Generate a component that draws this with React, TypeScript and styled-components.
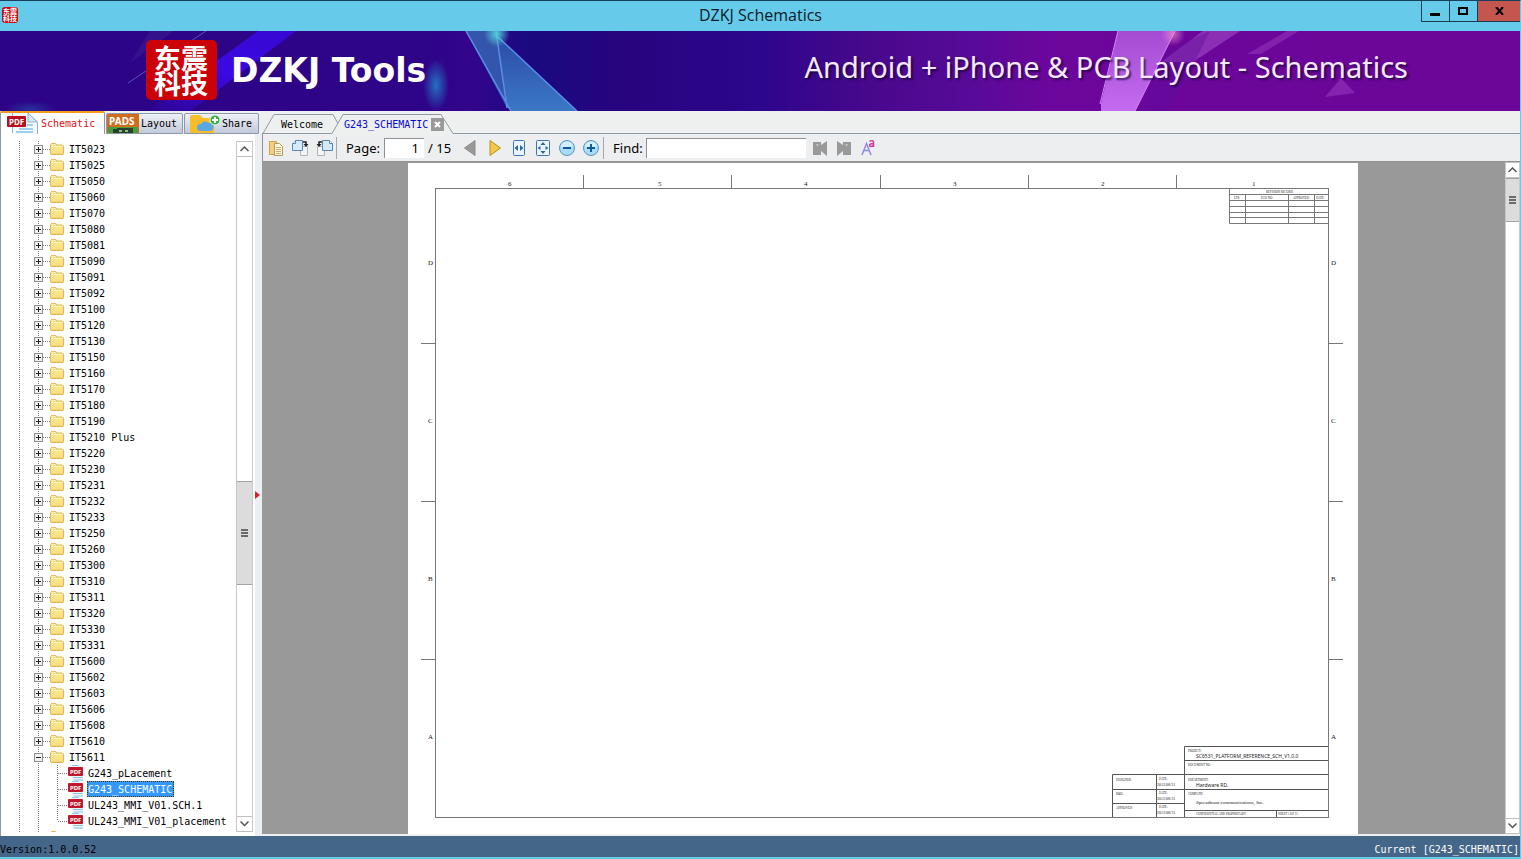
import React from "react";
import styled, { createGlobalStyle, css } from "styled-components";

const MONO = `"DejaVu Sans Mono", "Liberation Mono", monospace`;
const UI = `"Noto Sans", "Open Sans", sans-serif`;

const Global = createGlobalStyle`
  *, *::before, *::after { box-sizing: border-box; }
  body { margin: 0; background: #eef0f0; }
  button { margin: 0; padding: 0; border: 0; background: none; color: inherit; font: inherit; }
  ul { list-style: none; margin: 0; padding: 0; }
  h1, p { margin: 0; font-weight: 400; }
  svg { display: block; flex: none; }
`;

const Shell = styled.div`
  display: flex;
  flex-direction: column;
  height: 100vh;
  overflow: hidden;
  border-top: 1px solid #17405c;
  border-right: 1px solid #66caea;
  border-bottom: 2px solid #66caea;
  background: #eef0f0;
  font-family: ${MONO};
  font-size: 10px;
  color: #000;
`;

/* Title bar */
const TitleBar = styled.header`
  display: grid;
  grid-template-columns: 100px 1fr 100px;
  flex: none;
  height: 30px;
  margin-right: -1px;
  background: #66caea;
`;
const AppBadge = styled.div`
  width: 16px;
  height: 16px;
  margin: 6px 2px;
  padding: 1px;
  border-radius: 3px;
  background: #c60810;
  color: #fff;
  font: 700 7px/7px "Noto Sans CJK SC", sans-serif;
  word-break: break-all;
`;
const WindowTitle = styled.h1`
  font: 400 16px/29px "Open Sans", "Noto Sans", sans-serif;
  color: #0b1c26;
  text-align: center;
`;
const WindowButtons = styled.div`
  display: flex;
  height: 21px;
  border: solid #1c3a4a;
  border-width: 0 0 1px 1px;
`;
const WindowButton = styled.button<{ $close?: boolean }>`
  display: grid;
  place-items: center;
  flex: ${(p) => (p.$close ? "45" : "28")} 1 0;
  background: ${(p) => (p.$close ? "#c4564f" : "transparent")};
  & + & { border-left: 1px solid #1c3a4a; }
`;

/* Banner */
const Banner = styled.section`
  position: relative;
  display: flex;
  align-items: center;
  flex: none;
  height: 80px;
  padding: 0 112px 0 146px;
  color: #fff;
  background: linear-gradient(90deg, #2c0486 0, #2e0488 28%, #33058c 31%, #190a80 35%, #28047f 41%, #2c068c 50%, #47088c 57%, #580a98 64%, #6c069c 69%, #6c0698 100%);
`;
const BannerArt = styled.svg`
  position: absolute;
  inset: 0;
  width: 100%;
  height: 100%;
`;
const Seal = styled.div`
  position: relative;
  width: 71px;
  height: 60px;
  margin-top: -2px;
  padding: 5px 8px;
  border-radius: 5px;
  background: #cb0207;
  font: 700 27px/25px "Noto Sans CJK SC", sans-serif;
  word-break: break-all;
`;
const Brand = styled.p`
  position: relative;
  margin-left: 14px;
  font: 700 33px/40px "DejaVu Sans", sans-serif;
`;
const Tagline = styled.p`
  position: relative;
  margin: -8px 0 0 auto;
  font: 400 29px/40px ${UI};
  color: #f6e9fb;
  text-shadow: 2px 2px 2px rgba(20, 0, 50, 0.7);
`;

/* Main area */
const Workspace = styled.main`
  display: flex;
  flex: 1;
  min-height: 0;
`;
const Sidebar = styled.aside`
  display: flex;
  flex-direction: column;
  flex: none;
  width: 262px;
`;
const SideTabs = styled.div`
  display: flex;
  align-items: flex-end;
  flex: none;
  gap: 1px;
  height: 23px;
`;
const SideTab = styled.button<{ $active?: boolean; $width: number }>`
  display: flex;
  align-items: center;
  gap: 2px;
  width: ${(p) => p.$width}px;
  height: 21px;
  border: 1px solid #8b9bab;
  border-radius: 2px 2px 0 0;
  background: linear-gradient(#eff1f7, #c3c9da);
  white-space: nowrap;
  overflow: hidden;
  ${(p) =>
    p.$active &&
    css`
      height: 23px;
      padding-left: 6px;
      border-top: 2px solid #f59c1c;
      border-bottom: 0;
      background: #fff;
      color: #e0101c;
    `}
`;
const SidePanel = styled.div`
  display: flex;
  flex: 1;
  min-height: 0;
  padding: 7px 0 4px;
  border-left: 1px solid #8b9bab;
  background: linear-gradient(90deg, #fff 254px, #eceff1 254px);
`;
const Tree = styled.ul`
  flex: 1;
  min-width: 0;
  overflow: hidden;
  background:
    repeating-linear-gradient(#777 0 1px, #fff 1px 2px) 18px 0 / 1px 100% no-repeat,
    repeating-linear-gradient(#777 0 1px, #fff 1px 2px) 37px 0 / 1px 100% no-repeat;
`;
const TreeRow = styled.div<{ $level?: number }>`
  display: flex;
  align-items: center;
  height: 16px;
  padding-left: ${(p) => (p.$level ? 57 : 33)}px;
  white-space: nowrap;
`;
const Dots = styled.span<{ $width: number }>`
  width: ${(p) => p.$width}px;
  height: 1px;
  background: repeating-linear-gradient(90deg, #777 0 1px, #fff 1px 2px);
`;
const Toggle = styled.button`
  display: grid;
  place-items: center;
  width: 9px;
  height: 9px;
  border: 1px solid #8e8e8e;
  background: #f2f2f2;
`;
const FolderLabel = styled.span`
  margin-left: 5px;
`;
const FileList = styled.ul`
  background: repeating-linear-gradient(#777 0 1px, #fff 1px 2px) 56px 0 / 1px calc(100% - 8px) no-repeat;
`;
const FileLabel = styled.span<{ $selected?: boolean }>`
  height: 16px;
  margin-left: 3px;
  padding: 0 2px 0 1px;
  line-height: 18px;
  outline: 1px dotted ${(p) => (p.$selected ? "#5a3500" : "transparent")};
  outline-offset: -1px;
  background: ${(p) => (p.$selected ? "#3399ff" : "transparent")};
  color: ${(p) => (p.$selected ? "#fff" : "#000")};
`;

/* Scroll bars */
const ScrollBar = styled.div<{ $width: number }>`
  display: flex;
  flex-direction: column;
  flex: none;
  width: ${(p) => p.$width}px;
  border: 1px solid #c9c9c9;
  border-width: 0 1px;
  background: #fff;
`;
const ScrollArrow = styled.button`
  display: grid;
  place-items: center;
  flex: none;
  height: 16px;
  border: 1px solid #c0c0c0;
  border-width: 1px 0;
`;
const ScrollSpace = styled.div<{ $grow: number }>`
  flex: ${(p) => p.$grow} 1 0;
`;
const ScrollThumb = styled.div<{ $grow: number }>`
  display: grid;
  place-items: center;
  flex: ${(p) => p.$grow} 1 0;
  border: 1px solid #a3a3a3;
  border-width: 1px 0;
  background: #dcdcdc;
`;
const Splitter = styled.div`
  flex: none;
  width: 9px;
  display: flex;
  align-items: center;
  padding: 17px 0 0 2px;
`;

/* Viewer */
const Viewer = styled.section`
  display: flex;
  flex-direction: column;
  flex: 1;
  min-width: 0;
`;
const DocTabs = styled.div`
  display: flex;
  flex: none;
  height: 23px;
`;
const DocTab = styled.div<{ $active?: boolean }>`
  position: relative;
  display: flex;
  align-items: center;
  gap: 3px;
  width: ${(p) => (p.$active ? 121 : 70)}px;
  padding: 4px 0 0 ${(p) => (p.$active ? 12 : 19)}px;
  color: ${(p) => (p.$active ? "#0808d8" : "#000")};
`;
const TabShape = styled.svg`
  position: absolute;
  left: 0;
  top: 0;
  overflow: visible;
`;
const TabLabel = styled.button`
  position: relative;
`;
const CloseTab = styled.button`
  position: relative;
  display: grid;
  place-items: center;
  width: 13px;
  height: 13px;
  background: #999;
`;
const TabFill = styled.div`
  flex: 1;
  border-bottom: 1px solid #8f9ba4;
`;
const Toolbar = styled.div`
  display: flex;
  align-items: center;
  flex: none;
  height: 28px;
  padding-left: 5px;
  border: solid #8f9396;
  border-width: 0 0 1px 1px;
  background: #edeeef;
  font: 400 13px/20px ${UI};
`;
const ToolGroup = styled.div<{ $left?: number }>`
  display: flex;
  align-items: center;
  gap: 8px;
  margin-left: ${(p) => p.$left ?? 0}px;
`;
const ToolButton = styled.button`
  display: grid;
  place-items: center;
  width: 16px;
  height: 20px;
`;
const Separator = styled.i`
  width: 1px;
  height: 22px;
  margin: 0 9px 0 4px;
  background: #a5a8ab;
`;
const FieldLabel = styled.label`
  width: 33px;
`;
const Field = styled.input`
  width: 160px;
  height: 20px;
  margin: 0 4px 0 0;
  padding: 0 5px;
  border: solid #8f9396;
  border-width: 1px 0 0 1px;
  border-radius: 0;
  background: #fff;
  font: inherit;
  outline: 0;
`;
const PageField = styled(Field)`
  width: 40px;
  margin-left: 5px;
  text-align: right;
`;
const CanvasRow = styled.div`
  display: flex;
  flex: 1;
  min-height: 0;
  margin-bottom: 2px;
`;
const Canvas = styled.div`
  display: flex;
  justify-content: center;
  flex: 1;
  min-width: 0;
  overflow: hidden;
  padding: 1px 1px 0 0;
  background: #999;
`;
const Sheet = styled.svg`
  background: #fff;
`;

const StatusBar = styled.footer`
  display: flex;
  justify-content: space-between;
  flex: none;
  height: 21px;
  padding: 4px 1px 0 0;
  background: #446688;
  line-height: 20px;
  height: 21px;
  overflow: hidden;
`;
const StatusCurrent = styled.span`
  color: #fff;
`;

const folders = [
  "IT5023", "IT5025", "IT5050", "IT5060", "IT5070", "IT5080", "IT5081", "IT5090", "IT5091", "IT5092",
  "IT5100", "IT5120", "IT5130", "IT5150", "IT5160", "IT5170", "IT5180", "IT5190", "IT5210 Plus", "IT5220",
  "IT5230", "IT5231", "IT5232", "IT5233", "IT5250", "IT5260", "IT5300", "IT5310", "IT5311", "IT5320",
  "IT5330", "IT5331", "IT5600", "IT5602", "IT5603", "IT5606", "IT5608", "IT5610", "IT5611",
];
const files = ["G243_pLacement", "G243_SCHEMATIC", "UL243_MMI_V01.SCH.1", "UL243_MMI_V01_placement"];

const FolderIcon = () => (
  <svg width="14" height="13" viewBox="0 0 14 13">
    <path d="M.5 11V1.500l1-1h4l1.500 1.500h5.500l1 1V11l-.5.500H1z" fill="#fbe28a" stroke="#dfb958" />
    <path d="M1 3.500h12M1.500 1.500h3.500" stroke="#fff3bd" />
    <path d="M1.500 10.500h11" stroke="#f3d072" />
  </svg>
);

const PdfSmall = () => (
  <svg width="16" height="16" viewBox="0 0 16 16">
    <path d="M4 0h7l4 4v12H4z" fill="#e9f5fb" />
    <path d="M4 .5h6.500M5 12.500h10M6 15h9" stroke="#8fc4e2" />
    <rect x="0" y="2" width="15" height="9" rx="1" fill="#c3182b" />
    <text x="2" y="9" fontSize="6" fontWeight="700" fontFamily="Noto Sans" fill="#fff">PDF</text>
  </svg>
);

const PdfLarge = () => (
  <svg width="32" height="21" viewBox="0 0 32 21">
    <path d="M5 0h16l9 9v12H5z" fill="#f3f9fd" />
    <path d="M5.500 0v20M21 0l9.500 9v12" fill="none" stroke="#94b4cc" />
    <path d="M21 0v9h9z" fill="#d4e8f5" stroke="#94b4cc" />
    <path d="M12 16h14M20 12h6M9 19h17" stroke="#9fcfec" strokeWidth="2" />
    <rect x="0" y="3" width="19" height="11" rx="1" fill="#b90f1f" />
    <text x="2" y="12" fontSize="8" fontWeight="700" fontFamily="Noto Sans" fill="#fff">PDF</text>
  </svg>
);

const PadsIcon = () => (
  <svg width="32" height="19" viewBox="0 0 32 19">
    <rect width="32" height="19" fill="#cf6d1d" />
    <path d="M1 13h30v6H1z" fill="#4f9a3c" />
    <path d="M6 19v-4h4v-1h16v5z" fill="#28402d" />
    <path d="M12 16h3v2h-3zM18 16h3v2h-3z" fill="#8cc47b" />
    <text x="2" y="11" fontSize="10" fontWeight="700" fontFamily="Noto Sans" fill="#fff">PADS</text>
  </svg>
);

const ShareIcon = () => (
  <svg width="35" height="19" viewBox="0 0 35 19">
    <path d="M5 19V3q0-2 2-2h8l3 3h9q2 0 2 2v13z" fill="#f8bd2b" />
    <path d="M15 17a3.500 3.500 0 0 1 1-7 5 5 0 0 1 8-1 4 4 0 0 1 1 8z" fill="#5ba8e6" />
    <circle cx="30" cy="6" r="5" fill="#35ae4c" stroke="#e6f3e4" />
    <path d="M30 3v6M27 6h6" stroke="#fff" strokeWidth="2" />
  </svg>
);

const Chevron = ({ down }: { down?: boolean }) => (
  <svg width="9" height="6" viewBox="0 0 9 6">
    <path d={down ? "M.5.500 4.500 4.500 8.500.500" : "M.5 5 4.500 1 8.500 5"} fill="none" stroke="#555" strokeWidth="1.500" />
  </svg>
);
const Grip = () => (
  <svg width="7" height="8" viewBox="0 0 7 8">
    <path d="M0 1h7M0 4h7M0 7h7" stroke="#444" strokeWidth="1.600" />
  </svg>
);

const CopyIcon = () => (
  <svg width="16" height="16" viewBox="0 0 16 16">
    <path d="M1.500 1.500h7v13h-7z" fill="#f5ce7d" stroke="#d79f45" />
    <path d="M6.500 3.500h5l3 3v9h-8z" fill="#fff6df" stroke="#b29a69" />
    <path d="M8 7.500h5M8 9.500h5M8 11.500h5M8 13.500h5" stroke="#d0ae6d" />
  </svg>
);
const RotateIcon = ({ left }: { left?: boolean }) => (
  <svg width="17" height="16" viewBox="0 0 17 16">
    <g transform={left ? "translate(17 0) scale(-1 1)" : undefined}>
      <path d="M8.500 6.500h7v9h-7z" fill="#f4f4f4" stroke="#b3b3b3" />
      <path d="M3.500.500h7v10h-10v-7z" fill="#d5eafa" stroke="#5a86b8" />
      <path d="M.5 3.500h3v-3" fill="#fff" stroke="#5a86b8" />
      <path d="M11 2h3v3" fill="none" stroke="#222" strokeWidth="1.500" />
      <path d="M11.500 4h5L14 7z" fill="#222" />
    </g>
  </svg>
);
const ArrowIcon = ({ next }: { next?: boolean }) => (
  <svg width="12" height="16" viewBox="0 0 12 16">
    {next ? (
      <path d="M1 .5v15L11.500 8z" fill="#f2c846" stroke="#b98c24" />
    ) : (
      <path d="M11 .5v15L.5 8z" fill="#999" stroke="#8c8c8c" />
    )}
  </svg>
);
const FitIcon = ({ page }: { page?: boolean }) => (
  <svg width="14" height="16" viewBox="0 0 14 16">
    <rect x={page ? 0.5 : 1.5} y=".5" width={page ? 13 : 11} height="15" rx="1" fill="#e9f4fd" stroke="#3f74ae" />
    {page ? (
      <path d="M7 2 9.500 5h-5zM7 14l2.500-3h-5zM1.500 8l3-2v4zM12.500 8l-3-2v4z" fill="#2d66a5" />
    ) : (
      <path d="M2.500 8 6 5v6zM11.500 8 8 5v6z" fill="#2d66a5" />
    )}
  </svg>
);
const ZoomIcon = ({ plus }: { plus?: boolean }) => (
  <svg width="16" height="16" viewBox="0 0 16 16">
    <circle cx="8" cy="8" r="7.500" fill="#a9dcf8" stroke="#5b96c2" />
    <path d="M2 7a6 5.500 0 0 1 12 0z" fill="#d2effd" />
    <path d={plus ? "M4 8h8M8 4v8" : "M4 8h8"} stroke="#11599b" strokeWidth="2" />
  </svg>
);
const FindIcon = ({ next }: { next?: boolean }) => (
  <svg width="16" height="16" viewBox="0 0 16 16">
    <g transform={next ? "translate(16 0) scale(-1 1)" : undefined}>
      <path d="M1 2h8v3l6-4v15l-6-5v4H1z" fill="#999" />
      <path d="M4.500 4h2v2h-2z" fill="#c5c5c5" />
    </g>
  </svg>
);
const CaseIcon = () => (
  <svg width="16" height="16" viewBox="0 0 16 16">
    <path d="M2 15 6.500 3.500 11 15M3.500 10.500h6" fill="none" stroke="#9187ea" strokeWidth="1.500" />
    <path d="M9.500 1.500q3-2 4 .5V7M13.500 3.500q-4 0-4 2t4 0" fill="none" stroke="#cf3a9c" strokeWidth="1.500" />
  </svg>
);

const T = ({ x, y, s = 3, f = "Liberation Serif", children }: { x: number; y: number; s?: number; f?: string; children: React.ReactNode }) => (
  <text x={x} y={y} fontSize={s} fontFamily={f} fill="#222">{children}</text>
);

const columns: [string, number][] = [["6", 100], ["5", 250], ["4", 396], ["3", 545], ["2", 693], ["1", 844]];
const bands: [string, number][] = [["D", 102], ["C", 260], ["B", 418], ["A", 576]];

const SchematicSheet = () => (
  <Sheet width="950" height="671" viewBox="0 0 950 671" role="img" aria-label="G243_SCHEMATIC page 1">
    <g stroke="#777" fill="none">
      <rect x="27.500" y="25.500" width="893" height="629" />
      <path d="M175.500 12v13M323.500 12v13M472.500 12v13M620.500 12v13M768.500 12v13" />
      <path d="M13 180.500h14M13 338.500h14M13 496.500h14M921 180.500h14M921 338.500h14M921 496.500h14" />
      <path d="M821.500 25v35.500h99M821 31.500h99M821 37.500h99M821 43.500h99M821 49.500h99M821 54.500h99M837.500 31v29M880.500 31v29M906.500 31v29" />
    </g>
    <path d="M776.500 654v-70.500h144M776 597.500h144M704.500 654v-42.500h216M704 626.500h216M704 640.500h72M776 647.500h144M748.500 611v43M868.500 647v7" stroke="#555" fill="none" />
    {columns.map(([n, x]) => <T key={n} x={x} y={23} s={7}>{n}</T>)}
    {bands.map(([n, y]) => (
      <g key={n}>
        <T x={20} y={y} s={7}>{n}</T>
        <T x={923} y={y} s={7}>{n}</T>
      </g>
    ))}
    <T x={858} y={30}>REVISION RECORD</T>
    <T x={826} y={36}>LTR</T>
    <T x={853} y={36}>ECO NO:</T>
    <T x={885} y={36}>APPROVED:</T>
    <T x={908} y={36}>DATE:</T>
    <T x={780} y={589}>PROJECT:</T>
    <T x={788} y={595} s={5} f="Noto Sans">SC6531_PLATFORM_REFERENCE_SCH_V1.0.0</T>
    <T x={780} y={603}>DOCUMENT NO:</T>
    <T x={780} y={618}>DEPARTMENT:</T>
    <T x={788} y={624} s={5} f="Noto Sans">Hardware RD.</T>
    <T x={780} y={632}>COMPANY:</T>
    <T x={788} y={641} s={5}>Spreadtrum communications, Inc.</T>
    <T x={788} y={652}>CONFIDENTIAL AND PROPRIETARY</T>
    <T x={870} y={652}>SHEET 1 OF 15</T>
    {["DESIGNER:", "R&D:", "APPROVED:"].map((label, i) => (
      <g key={label}>
        <T x={708} y={618 + i * 14}>{label}</T>
        <T x={751} y={617 + i * 14}>DATE:</T>
        <T x={749} y={623 + i * 14} s={4}>2012/08/31</T>
      </g>
    ))}
  </Sheet>
);

const BannerBackdrop = () => (
  <BannerArt viewBox="0 0 1520 80" preserveAspectRatio="none" aria-hidden="true">
    <defs>
      <linearGradient id="ray" x1="1" y1="0" x2="0" y2="1">
        <stop offset="0" stopColor="#3708d0" />
        <stop offset="0.500" stopColor="#3b09e2" />
        <stop offset="1" stopColor="#2d0590" />
      </linearGradient>
      <linearGradient id="glass" x1="0" y1="0" x2="0" y2="1">
        <stop offset="0" stopColor="#2c4aa6" />
        <stop offset="1" stopColor="#3b78c6" />
      </linearGradient>
      <linearGradient id="violet" x1="0" y1="0" x2="0" y2="1">
        <stop offset="0" stopColor="#a44bd2" />
        <stop offset="1" stopColor="#c46cf0" />
      </linearGradient>
      <radialGradient id="spark">
        <stop offset="0" stopColor="#4fd0d8" />
        <stop offset="1" stopColor="#4fd0d8" stopOpacity="0" />
      </radialGradient>
      <radialGradient id="glow">
        <stop offset="0" stopColor="#2470c0" />
        <stop offset="1" stopColor="#2470c0" stopOpacity="0" />
      </radialGradient>
      <radialGradient id="pink">
        <stop offset="0" stopColor="#f08ad0" />
        <stop offset="1" stopColor="#f08ad0" stopOpacity="0" />
      </radialGradient>
    </defs>
    <path d="M258 0h38L190 80h-42z" fill="url(#ray)" />
    <path d="M150 0h24l-44 32z" fill="#3a1f90" opacity=".5" />
    <path d="M206 0 128 52" stroke="#5b51b4" />
    <ellipse cx="436" cy="54" rx="13" ry="26" fill="url(#glow)" />
    <ellipse cx="30" cy="78" rx="26" ry="8" fill="url(#glow)" opacity=".4" />
    <path d="M466 0h30l11 77z" fill="#3355ac" />
    <path d="M497 5 577 80h-66l-4-4z" fill="url(#glass)" />
    <path d="m466 0 45 80M496 0l11 77M497 5l80 75" stroke="#5a8fe6" strokeWidth="1.500" fill="none" />
    <circle cx="497" cy="3" r="13" fill="url(#spark)" />
    <path d="M1118 0h57l-40 80h-34v-8z" fill="url(#violet)" />
    <path d="m1118 0-18 73M1175 0l-40 80" stroke="#d38af2" />
    <path d="M1203 0h37l-47 31h-32z" fill="#8d2fb4" />
    <path d="M1287 0h12l-38 23h-14z" fill="#8320ac" />
    <path d="M1166 20 1140 80h30l40-80z" fill="#5f0c9c" opacity=".4" />
    <path d="m1341 47 14 15-30 4z" fill="#8523ae" />
    <circle cx="1173" cy="3" r="12" fill="url(#pink)" opacity=".7" />
  </BannerArt>
);

export default function App() {
  return (
    <Shell>
      <Global />
      <TitleBar>
        <AppBadge aria-hidden="true">东震科技</AppBadge>
        <WindowTitle>DZKJ Schematics</WindowTitle>
        <WindowButtons>
          <WindowButton aria-label="Minimize"><svg width="10" height="11"><path d="M0 8.500h10" stroke="#000" strokeWidth="3" /></svg></WindowButton>
          <WindowButton aria-label="Maximize"><svg width="10" height="8"><rect x="1" y="1" width="8" height="6" fill="none" stroke="#000" strokeWidth="2" /></svg></WindowButton>
          <WindowButton $close aria-label="Close"><svg width="9" height="8"><path d="m1 0 7 8M8 0 1 8" stroke="#000" strokeWidth="2" /></svg></WindowButton>
        </WindowButtons>
      </TitleBar>
      <Banner>
        <BannerBackdrop />
        <Seal>东震科技</Seal>
        <Brand>DZKJ Tools</Brand>
        <Tagline>Android + iPhone &amp; PCB Layout - Schematics</Tagline>
      </Banner>
      <Workspace>
        <Sidebar>
          <SideTabs>
            <SideTab $active $width={105}><PdfLarge />Schematic</SideTab>
            <SideTab $width={77}><PadsIcon />Layout</SideTab>
            <SideTab $width={75}><ShareIcon />Share</SideTab>
          </SideTabs>
          <SidePanel>
            <Tree>
              {folders.map((name) => {
                const open = name === "IT5611";
                return (
                  <li key={name}>
                    <TreeRow>
                      <Toggle aria-label={`${open ? "Collapse" : "Expand"} ${name}`}>
                        <svg width="7" height="7"><path d={open ? "M1 3.500h5" : "M1 3.500h5M3.500 1v5"} stroke="#222" /></svg>
                      </Toggle>
                      <Dots $width={7} />
                      <FolderIcon />
                      <FolderLabel>{name}</FolderLabel>
                    </TreeRow>
                    {open && (
                      <FileList>
                        {files.map((file) => (
                          <li key={file}>
                            <TreeRow $level={1}>
                              <Dots $width={10} />
                              <PdfSmall />
                              <FileLabel $selected={file === "G243_SCHEMATIC"}>{file}</FileLabel>
                            </TreeRow>
                          </li>
                        ))}
                      </FileList>
                    )}
                  </li>
                );
              })}
              <li>
                <TreeRow>
                  <Dots $width={16} />
                  <FolderIcon />
                </TreeRow>
              </li>
            </Tree>
            <ScrollBar $width={17}>
              <ScrollArrow aria-label="Scroll up"><Chevron /></ScrollArrow>
              <ScrollSpace $grow={324} />
              <ScrollThumb $grow={103}><Grip /></ScrollThumb>
              <ScrollSpace $grow={231} />
              <ScrollArrow aria-label="Scroll down"><Chevron down /></ScrollArrow>
            </ScrollBar>
            <Splitter>
              <svg width="5" height="8"><path d="M0 0v8l5-4z" fill="#d8232a" /></svg>
            </Splitter>
          </SidePanel>
        </Sidebar>
        <Viewer>
          <DocTabs>
            <DocTab>
              <TabShape width="70" height="23" aria-hidden="true">
                <path d="M0 22.500h1L12 3.500h59l5 9" fill="none" stroke="#8f9ba4" />
                <path d="M0 22.500h70" stroke="#8f9ba4" />
              </TabShape>
              <TabLabel>Welcome</TabLabel>
            </DocTab>
            <DocTab $active>
              <TabShape width="121" height="23" aria-hidden="true">
                <path d="M0 22.500 11 3.500h98l12 19" fill="#eef0f0" stroke="#8f9ba4" />
              </TabShape>
              <TabLabel>G243_SCHEMATIC</TabLabel>
              <CloseTab aria-label="Close tab"><svg width="7" height="7"><path d="m1 1 5 5M6 1 1 6" stroke="#fff" strokeWidth="2" /></svg></CloseTab>
            </DocTab>
            <TabFill />
          </DocTabs>
          <Toolbar>
            <ToolGroup>
              <ToolButton aria-label="Copy"><CopyIcon /></ToolButton>
              <ToolButton aria-label="Rotate right"><RotateIcon /></ToolButton>
              <ToolButton aria-label="Rotate left"><RotateIcon left /></ToolButton>
            </ToolGroup>
            <Separator />
            <FieldLabel htmlFor="page">Page:</FieldLabel>
            <PageField id="page" defaultValue="1" />
            <span>/ 15</span>
            <ToolGroup $left={11}>
              <ToolButton aria-label="Previous page"><ArrowIcon /></ToolButton>
            </ToolGroup>
            <ToolGroup $left={9}>
              <ToolButton aria-label="Next page"><ArrowIcon next /></ToolButton>
              <ToolButton aria-label="Fit width"><FitIcon /></ToolButton>
              <ToolButton aria-label="Fit page"><FitIcon page /></ToolButton>
              <ToolButton aria-label="Zoom out"><ZoomIcon /></ToolButton>
              <ToolButton aria-label="Zoom in"><ZoomIcon plus /></ToolButton>
            </ToolGroup>
            <Separator />
            <FieldLabel htmlFor="find">Find:</FieldLabel>
            <Field id="find" />
            <ToolGroup $left={2}>
              <ToolButton aria-label="Find previous"><FindIcon /></ToolButton>
              <ToolButton aria-label="Find next"><FindIcon next /></ToolButton>
              <ToolButton aria-label="Match case"><CaseIcon /></ToolButton>
            </ToolGroup>
          </Toolbar>
          <CanvasRow>
            <Canvas><SchematicSheet /></Canvas>
            <ScrollBar $width={15}>
              <ScrollArrow aria-label="Scroll up"><Chevron /></ScrollArrow>
              <ScrollThumb $grow={42}><Grip /></ScrollThumb>
              <ScrollSpace $grow={598} />
              <ScrollArrow aria-label="Scroll down"><Chevron down /></ScrollArrow>
            </ScrollBar>
          </CanvasRow>
        </Viewer>
      </Workspace>
      <StatusBar>
        <span>Version:1.0.0.52</span>
        <StatusCurrent>Current [G243_SCHEMATIC]</StatusCurrent>
      </StatusBar>
    </Shell>
  );
}
